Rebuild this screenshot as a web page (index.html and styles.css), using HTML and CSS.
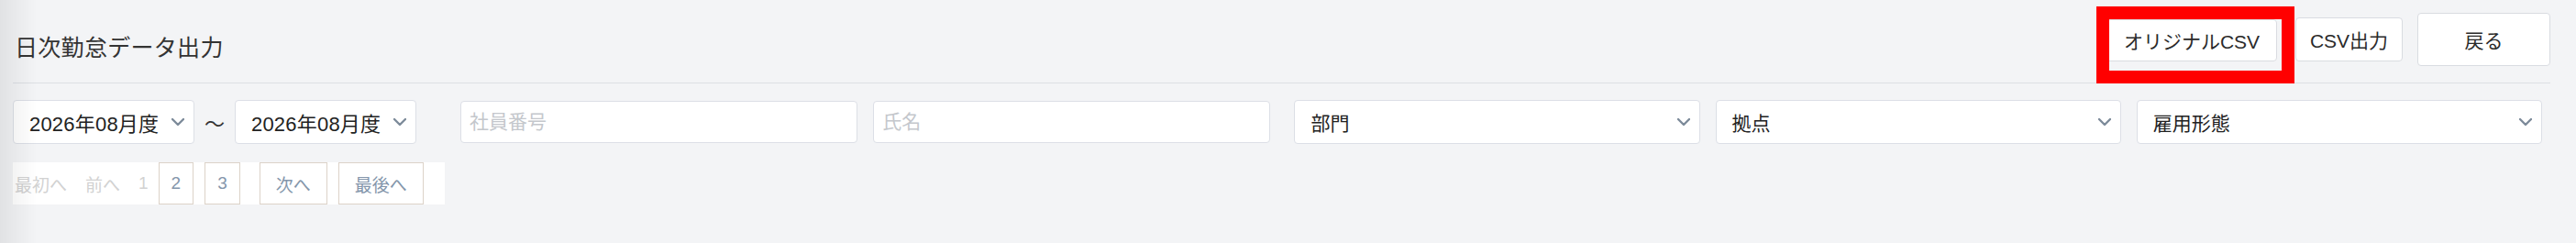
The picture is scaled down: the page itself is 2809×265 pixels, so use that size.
FILE: index.html
```html
<!DOCTYPE html>
<html lang="ja">
<head>
    <meta charset="UTF-8">
    <meta name="viewport" content="width=device-width, initial-scale=1.0">
    <title>日次勤怠データ出力</title>
    <link rel="stylesheet" href="styles.css">
</head>
<body>

    <div class="page">
        <!-- Header: title + actions -->
        <div class="page-header">
            <h1 class="page-title">日次勤怠データ出力</h1>
            <div class="actions">
                <div class="highlight-wrap">
                    <button class="btn btn-original">オリジナルCSV</button>
                    <span class="highlight-box"></span>
                </div>
                <button class="btn btn-csv">CSV出力</button>
                <button class="btn btn-back">戻る</button>
            </div>
        </div>

        <!-- Filters -->
        <div class="filter-row">
            <div class="period">
                <div class="select-box select-month">
                    <span>2026年08月度</span>
                    <svg class="chevron" viewBox="0 0 14 8" width="14" height="8"><path d="M1 1 L7 7 L13 1" /></svg>
                </div>
                <span class="tilde">〜</span>
                <div class="select-box select-month">
                    <span>2026年08月度</span>
                    <svg class="chevron" viewBox="0 0 14 8" width="14" height="8"><path d="M1 1 L7 7 L13 1" /></svg>
                </div>
            </div>
            <div class="fields">
                <input class="text-input" type="text" placeholder="社員番号">
                <input class="text-input name-input" type="text" placeholder="氏名">
                <div class="select-box">
                    <span>部門</span>
                    <svg class="chevron" viewBox="0 0 14 8" width="14" height="8"><path d="M1 1 L7 7 L13 1" /></svg>
                </div>
                <div class="select-box">
                    <span>拠点</span>
                    <svg class="chevron" viewBox="0 0 14 8" width="14" height="8"><path d="M1 1 L7 7 L13 1" /></svg>
                </div>
                <div class="select-box">
                    <span>雇用形態</span>
                    <svg class="chevron" viewBox="0 0 14 8" width="14" height="8"><path d="M1 1 L7 7 L13 1" /></svg>
                </div>
            </div>
        </div>

        <!-- Pagination -->
        <div class="pager">
            <span class="pager-disabled first">最初へ</span>
            <span class="pager-disabled">前へ</span>
            <span class="pager-disabled current">1</span>
            <a class="pager-link num" href="#">2</a>
            <a class="pager-link num" href="#">3</a>
            <a class="pager-link next" href="#">次へ</a>
            <a class="pager-link" href="#">最後へ</a>
        </div>
    </div>

</body>
</html>
```

FILE: styles.css
```css
body, html {
    height: 100%;
    margin: 0;
    font-family: "Liberation Sans", "Noto Sans CJK JP", sans-serif;
    background-color: #f3f4f6;
    color: #333;
    overflow: hidden;
}

/* sidebar shadow falling over the left edge */
body::before {
    content: "";
    position: fixed;
    top: 0;
    left: 0;
    bottom: 0;
    width: 40px;
    background: linear-gradient(to right, rgba(0, 0, 0, 0.07), rgba(0, 0, 0, 0));
    pointer-events: none;
    z-index: 10;
}

.page {
    padding: 0 28px 0 14px;
}

.page-header {
    display: flex;
    justify-content: space-between;
    align-items: flex-start;
    padding: 14px 0 18px;
    border-bottom: 1px solid #dcdfe4;
}

.page-title {
    margin: 20px 0 0 2px;
    font-size: 25px;
    letter-spacing: 0.3px;
    line-height: 36px;
    font-weight: normal;
    color: #333;
}

.actions {
    display: flex;
    align-items: center;
    height: 58px;
}

.btn {
    font-family: inherit;
    font-size: 21px;
    color: #2a2a2a;
    background-color: #fff;
    border: 1px solid #d9dce1;
    border-radius: 4px;
    padding: 0 16px;
    cursor: pointer;
}

.btn-original {
    height: 46px;
    width: 186px;
    padding: 0;
}

.btn-csv {
    height: 48px;
    width: 117px;
    padding: 0;
    margin-left: 20px;
}

.btn-back {
    height: 58px;
    width: 145px;
    margin-left: 16px;
}

.highlight-wrap {
    position: relative;
    display: flex;
    margin-top: 2px;
}

/* red annotation frame */
.highlight-box {
    position: absolute;
    left: -11px;
    top: -14px;
    width: 216px;
    height: 84px;
    border: 14px solid #ff0000;
    box-sizing: border-box;
    pointer-events: none;
}

.filter-row {
    display: flex;
    align-items: center;
    margin-top: 18px;
    padding-right: 9px;
}

.period {
    display: flex;
    align-items: center;
    gap: 4px;
    margin-right: 48px;
}

.tilde {
    width: 36px;
    text-align: center;
    font-size: 22px;
    color: #333;
}

.fields {
    flex: 1;
    display: flex;
    align-items: center;
    gap: 17px;
}

.fields > * {
    flex: 1;
    min-width: 0;
}

.select-box {
    display: flex;
    align-items: center;
    justify-content: space-between;
    height: 48px;
    box-sizing: border-box;
    padding: 0 10px 0 17px;
    background-color: #fff;
    border: 1px solid #dcdfe6;
    border-radius: 4px;
    font-size: 21px;
    color: #222;
}

.select-month {
    width: 198px;
    font-size: 22px;
    letter-spacing: 0.2px;
}

.chevron {
    flex: none;
    fill: none;
    stroke: #7d8b9a;
    stroke-width: 2.4;
    stroke-linecap: round;
    stroke-linejoin: round;
}

.text-input {
    height: 46px;
    box-sizing: border-box;
    padding: 0 9px;
    background-color: #fff;
    border: 1px solid #dcdfe6;
    border-radius: 4px;
    font-family: inherit;
    font-size: 21px;
    color: #222;
    outline: none;
}

.text-input::placeholder {
    color: #c4c7cc;
}

.name-input {
    margin-right: 9px;
}

.pager {
    display: inline-flex;
    align-items: stretch;
    height: 46px;
    margin-top: 20px;
    padding-right: 23px;
    background-color: #fff;
    font-size: 19px;
}

.pager-disabled {
    display: flex;
    align-items: center;
    margin-left: 20px;
    color: #d2d2d2;
}

.pager-disabled.first {
    margin-left: 2px;
}

.pager-link {
    display: flex;
    align-items: center;
    padding: 0 17px;
    margin-left: 12px;
    border: 1px solid #dcd2c8;
    color: #8496ab;
    text-decoration: none;
}

.pager-link.num {
    padding: 0 13px;
}

.pager-link.num:first-of-type {
    margin-left: 11px;
}

.pager-link.next {
    margin-left: 21px;
}
```
